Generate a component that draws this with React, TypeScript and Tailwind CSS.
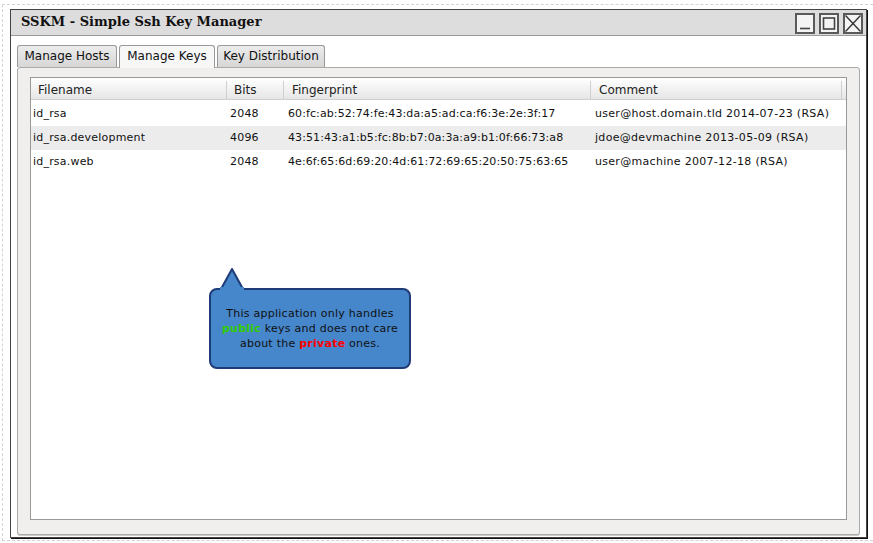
import React from "react";

const rows = [
  ["id_rsa", "2048", "60:fc:ab:52:74:fe:43:da:a5:ad:ca:f6:3e:2e:3f:17", "user@host.domain.tld 2014-07-23 (RSA)"],
  ["id_rsa.development", "4096", "43:51:43:a1:b5:fc:8b:b7:0a:3a:a9:b1:0f:66:73:a8", "jdoe@devmachine 2013-05-09 (RSA)"],
  ["id_rsa.web", "2048", "4e:6f:65:6d:69:20:4d:61:72:69:65:20:50:75:63:65", "user@machine 2007-12-18 (RSA)"],
];

function WinButton({ kind }: { kind: "min" | "max" | "close" }) {
  return (
    <div className="w-[20px] h-[21px] border-2 border-[#5a5a5a] bg-[#f4f4f4] flex items-center justify-center">
      <svg width="16" height="17" viewBox="0 0 16 17">
        {kind === "min" && <line x1="3" y1="13.5" x2="13" y2="13.5" stroke="#444" strokeWidth="1.6" />}
        {kind === "max" && <rect x="2.5" y="3" width="11" height="11" fill="none" stroke="#444" strokeWidth="1.6" />}
        {kind === "close" && (
          <g stroke="#333" strokeWidth="1.3">
            <line x1="0.5" y1="0.5" x2="15.5" y2="16.5" />
            <line x1="15.5" y1="0.5" x2="0.5" y2="16.5" />
          </g>
        )}
      </svg>
    </div>
  );
}

export default function App() {
  return (
    <div className="w-[873px] h-[543px] bg-white pt-[4px] pl-[2px] pb-[2px] overflow-hidden font-['DejaVu_Sans',sans-serif] text-[#111]">
      <div className="h-full border-l border-t border-b border-dashed border-[#d4d4d4] pl-[7px] pt-[4px]">
        <div className="w-[857px] h-[529px] border border-[#444] shadow-[1px_1px_0_#111] flex flex-col bg-white">
          {/* title bar */}
          <div className="h-[26px] bg-[#dddddd] border-b border-[#9a9a9a] flex items-center justify-between pl-[10px] pr-[3px]">
            <span className="font-['DejaVu_Serif',serif] font-bold text-[13px] text-[#111] pb-[1px]">
              SSKM - Simple Ssh Key Manager
            </span>
            <div className="flex gap-[4px] pt-[2px]">
              <WinButton kind="min" />
              <WinButton kind="max" />
              <WinButton kind="close" />
            </div>
          </div>
          {/* content */}
          <div className="flex-1 flex flex-col px-[6px] pt-[9px] pb-[2px]">
            <div className="flex gap-[2px] h-[22px] relative z-10">
              <div className="w-[100px] h-[22px] border border-b-0 border-[#999] rounded-t-[3px] bg-gradient-to-b from-[#ececec] to-[#d6d6d6] flex items-center justify-center text-[12px] pb-[2px]">
                Manage Hosts
              </div>
              <div className="w-[96px] h-[23px] border border-b-0 border-[#999] rounded-t-[3px] bg-[#f7f7f7] flex items-center justify-center text-[12px] pb-[3px]">
                Manage Keys
              </div>
              <div className="w-[108px] h-[22px] border border-b-0 border-[#999] rounded-t-[3px] bg-gradient-to-b from-[#ececec] to-[#d6d6d6] flex items-center justify-center text-[12px] pb-[2px]">
                Key Distribution
              </div>
            </div>
            <div className="flex-1 flex flex-col border border-[#aaa] rounded-[3px] bg-[#f0efed] pt-[9px] pl-[12px] pr-[12px] pb-[14px] shadow-[0_1px_0_#ccc]">
              <div className="flex-1 border border-[#999] bg-white relative text-[11px] tracking-[0.2px]">
                <div className="grid grid-cols-[196px_57px_307px_251px_1fr] h-[22px] bg-gradient-to-b from-white to-[#e6e6e6] border-b border-[#cfcfcf] text-[12px] tracking-normal text-[#222]">
                  <div className="flex items-center pl-[7px] border-r border-[#cfcfcf] my-[3px]">Filename</div>
                  <div className="flex items-center pl-[7px] border-r border-[#cfcfcf] my-[3px]">Bits</div>
                  <div className="flex items-center pl-[8px] border-r border-[#cfcfcf] my-[3px]">Fingerprint</div>
                  <div className="flex items-center pl-[8px] border-r border-[#cfcfcf] my-[3px]">Comment</div>
                  <div />
                </div>
                <div className="pt-[2px]">
                  {rows.map((r, i) => (
                    <div
                      key={i}
                      className={`grid grid-cols-[196px_57px_307px_251px_1fr] h-[24px] items-center ${i === 1 ? "bg-[#ececec]" : "bg-white"}`}
                    >
                      <div className="pl-[2px]">{r[0]}</div>
                      <div className="pl-[3px]">{r[1]}</div>
                      <div className="pl-[4px] tracking-[0.1px]">{r[2]}</div>
                      <div className="pl-[4px] tracking-[0.3px]">{r[3]}</div>
                      <div />
                    </div>
                  ))}
                </div>
                {/* callout */}
                <div className="absolute left-[178px] top-[210px] w-[202px] h-[81px] tracking-[0.25px]">
                  <svg className="absolute left-[10px] top-[-21px]" width="26" height="24" viewBox="0 0 26 24">
                    <path d="M2 22 L13 2 L24 22" fill="#4686ca" stroke="#1f3c78" strokeWidth="2" strokeLinejoin="round" />
                  </svg>
                  <div className="w-full h-full bg-[#4686ca] border-2 border-[#1f3c78] rounded-[8px] flex flex-col items-center justify-center text-[11px] leading-[15px] text-[#111] text-center">
                    <div>This application only handles</div>
                    <div>
                      <span className="font-bold text-[#33cc00]">public</span> keys and does not care
                    </div>
                    <div>
                      about the <span className="font-bold text-[#ff0000]">private</span> ones.
                    </div>
                  </div>
                  <svg className="absolute left-[11px] top-[-1px]" width="24" height="4" viewBox="0 0 24 4">
                    <rect x="0" y="0" width="24" height="4" fill="#4686ca" />
                  </svg>
                </div>
              </div>
            </div>
          </div>
        </div>
      </div>
    </div>
  );
}
